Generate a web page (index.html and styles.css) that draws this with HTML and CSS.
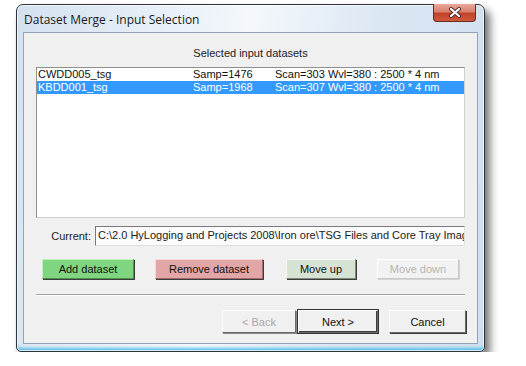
FILE: index.html
```
<!DOCTYPE html>
<html lang="en">
<head>
    <meta charset="UTF-8">
    <title>Dataset Merge - Input Selection</title>
    <link rel="stylesheet" href="styles.css">
</head>
<body>
    <div class="window">
        <div class="titlebar">
            <span class="title">Dataset Merge - Input Selection</span>
            <div class="close-btn">
                <svg width="14" height="11" viewBox="0 0 14 11">
                    <path d="M3 2 L11 9 M11 2 L3 9" stroke="#4a2a26" stroke-width="4" stroke-linecap="round"/>
                    <path d="M3 2 L11 9 M11 2 L3 9" stroke="#ffffff" stroke-width="2.2" stroke-linecap="round"/>
                </svg>
            </div>
        </div>
        <div class="client">
            <div class="heading">Selected input datasets</div>
            <div class="listbox">
                <div class="row">
                    <span>CWDD005_tsg</span>
                    <span>Samp=1476</span>
                    <span>Scan=303 Wvl=380 : 2500 * 4 nm</span>
                </div>
                <div class="row selected">
                    <span>KBDD001_tsg</span>
                    <span>Samp=1968</span>
                    <span>Scan=307 Wvl=380 : 2500 * 4 nm</span>
                </div>
            </div>
            <div class="current">
                <label>Current:</label>
                <div class="path-field">C:\2.0 HyLogging and Projects 2008\Iron ore\TSG Files and Core Tray Images</div>
            </div>
            <div class="actions">
                <button class="btn btn-add">Add dataset</button>
                <button class="btn btn-remove">Remove dataset</button>
                <button class="btn btn-up">Move up</button>
                <button class="btn btn-down" disabled>Move down</button>
            </div>
            <div class="separator"></div>
            <div class="nav">
                <button class="btn nav-back" disabled>&lt; Back</button>
                <button class="btn nav-next">Next &gt;</button>
                <button class="btn nav-cancel">Cancel</button>
            </div>
        </div>
    </div>
</body>
</html>
```

FILE: styles.css
```
body {
    margin: 0;
    padding: 0;
    background-color: #ffffff;
    font-family: "Liberation Sans", Arial, sans-serif;
    font-size: 11px;
    color: #000;
}
.window {
    box-sizing: border-box;
    width: 469px;
    height: 348px;
    margin: 4px 0 0 16px;
    padding: 0 6px 7px 6px;
    border: 1px solid #2e343a;
    border-radius: 7px 7px 5px 5px;
    background: linear-gradient(100deg, #d3e1ef 0%, #e6eef7 25%, #f4f8fc 45%, #dbe7f3 70%, #cfdfee 100%);
    box-shadow: 5px 6px 9px rgba(0, 0, 0, 0.55), inset 0 0 0 1px rgba(255, 255, 255, 0.7), inset 0 -4px 3px -1px #5cc2ec;
}
.titlebar {
    height: 27px;
    display: flex;
    justify-content: space-between;
    align-items: center;
}
.title {
    font-family: "Open Sans", "Liberation Sans", sans-serif;
    font-size: 12px;
    padding-left: 1px;
    padding-top: 1px;
    color: #1a1a1a;
}
.close-btn {
    align-self: flex-start;
    margin-top: -1px;
    margin-right: 2px;
    width: 43px;
    height: 18px;
    box-sizing: border-box;
    border: 1px solid #6b2a22;
    border-top: none;
    border-radius: 0 0 4px 4px;
    background: linear-gradient(#e9a89a 0%, #d9826f 45%, #c2412a 55%, #cf5a3c 100%);
    display: flex;
    align-items: center;
    justify-content: center;
}
.client {
    box-sizing: border-box;
    height: 312px;
    border: 1px solid #93a3b6;
    background-color: #f0f0f0;
    display: flex;
    flex-direction: column;
}
.heading {
    margin-top: 13px;
    line-height: 14px;
    text-align: center;
    color: #222;
}
.listbox {
    box-sizing: border-box;
    margin: 7px 0 0 12px;
    width: 429px;
    height: 151px;
    background-color: #fff;
    border: 1px solid #8e8f8f;
    border-right-color: #d0d0d0;
    border-bottom-color: #d0d0d0;
}
.row {
    display: grid;
    grid-template-columns: 155px 82px 1fr;
    height: 13px;
    line-height: 13px;
    padding-left: 1px;
    color: #111;
    white-space: nowrap;
}
.row.selected {
    background-color: #3399ff;
    color: #fff;
}
.current {
    margin-top: 8px;
    display: flex;
    align-items: center;
}
.current label {
    width: 67px;
    text-align: right;
    padding-right: 4px;
    color: #222;
}
.path-field {
    box-sizing: border-box;
    width: 370px;
    height: 20px;
    line-height: 17px;
    padding-left: 2px;
    background-color: #fbfbfb;
    border: 1px solid #7a7a7a;
    border-right-color: #e0e0e0;
    border-bottom-color: #e0e0e0;
    white-space: nowrap;
    overflow: hidden;
    color: #222;
}
.btn {
    box-sizing: border-box;
    font-family: "Liberation Sans", Arial, sans-serif;
    font-size: 11px;
    color: #111;
    height: 20px;
    padding: 0;
    border: 1px solid;
    border-color: #ffffff #6a6a6a #6a6a6a #ffffff;
    box-shadow: 1px 1px 0 #3c3c3c;
    background-color: #f0f0f0;
}
.actions {
    margin: 13px 0 0 18px;
    display: flex;
}
.btn-add {
    width: 92px;
    background-color: #80d680;
    border-color: #c0f0c0 #4f8f4f #4f8f4f #c0f0c0;
}
.btn-remove {
    width: 108px;
    margin-left: 21px;
    background-color: #e3a6a6;
    border-color: #f6d6d6 #a06a6a #a06a6a #f6d6d6;
}
.btn-up {
    width: 70px;
    margin-left: 23px;
    background-color: #d6e3d2;
    border-color: #f2f8f0 #7d8a7a #7d8a7a #f2f8f0;
}
.btn-down {
    width: 82px;
    margin-left: 21px;
    color: #b4b4b4;
    background-color: #f2f2f2;
    border-color: #ffffff #c8c8c8 #c8c8c8 #ffffff;
    box-shadow: 1px 1px 0 #d4d4d4;
}
.separator {
    margin: 15px 0 0 12px;
    width: 429px;
    height: 1px;
    background-color: #a0a0a0;
    border-bottom: 1px solid #ffffff;
}
.nav {
    margin: 14px 0 0 198px;
    display: flex;
}
.nav .btn {
    height: 23px;
}
.nav-back {
    width: 74px;
    color: #a8a8a8;
    box-shadow: 1px 1px 0 #8a8a8a;
}
.nav-next {
    width: 80px;
    margin-left: 2px;
    outline: 1px solid #333;
    outline-offset: 0;
    box-shadow: inset -1px -1px 0 #3c3c3c;
}
.nav-cancel {
    width: 77px;
    margin-left: 11px;
}
```
